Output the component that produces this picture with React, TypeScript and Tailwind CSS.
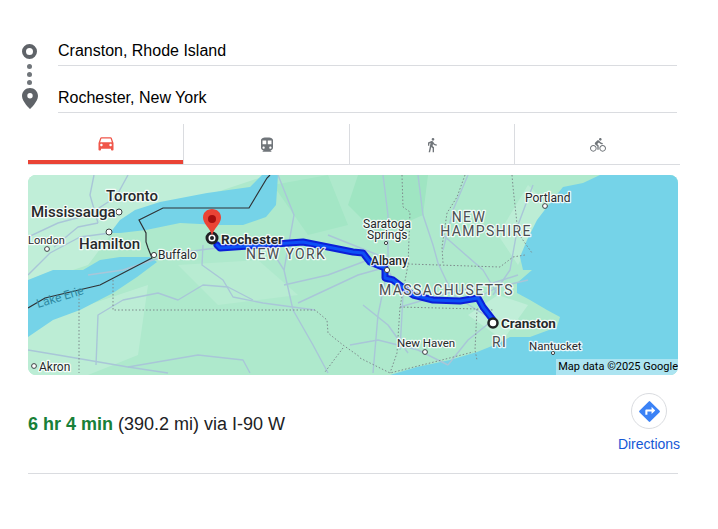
const CAR = "M18.92 6.01C18.72 5.42 18.16 5 17.5 5h-11c-.66 0-1.21.42-1.42 1.01L3 12v8c0 .55.45 1 1 1h1c.55 0 1-.45 1-1v-1h12v1c0 .55.45 1 1 1h1c.55 0 1-.45 1-1v-8l-2.08-5.99zM6.5 16c-.83 0-1.5-.67-1.5-1.5S5.67 13 6.5 13s1.5.67 1.5 1.5S7.33 16 6.5 16zm11 0c-.83 0-1.5-.67-1.5-1.5s.67-1.5 1.5-1.5 1.5.67 1.5 1.5-.67 1.5-1.5 1.5zM5 11l1.5-4.5h11L19 11H5z";
const TRANSIT = "M12 2c-4.42 0-8 .5-8 4v9.5C4 17.43 5.57 19 7.5 19L6 20.5v.5h12v-.5L16.5 19c1.93 0 3.5-1.57 3.5-3.5V6c0-3.5-3.58-4-8-4zM7.5 17c-.83 0-1.5-.67-1.5-1.5S6.67 14 7.5 14s1.5.67 1.5 1.5S8.33 17 7.5 17zm3.5-6H6V6h5v5zm5.5 6c-.83 0-1.5-.67-1.5-1.5s.67-1.5 1.5-1.5 1.5.67 1.5 1.5-.67 1.5-1.5 1.5zm1.5-6h-5V6h5v5z";
const WALK = "M13.5 5.5c1.1 0 2-.9 2-2s-.9-2-2-2-2 .9-2 2 .9 2 2 2zM9.8 8.9L7 23h2.1l1.8-8 2.1 2v6h2v-7.5l-2.1-2 .6-3C14.8 12 16.8 13 19 13v-2c-1.9 0-3.5-1-4.3-2.4l-1-1.6c-.4-.6-1-1-1.7-1-.3 0-.5.1-.8.1L6 8.3V13h2V9.6l1.8-.7";
const BIKE = "M15.5 5.5c1.1 0 2-.9 2-2s-.9-2-2-2-2 .9-2 2 .9 2 2 2zM5 12c-2.8 0-5 2.2-5 5s2.2 5 5 5 5-2.2 5-5-2.2-5-5-5zm0 8.5c-1.9 0-3.5-1.6-3.5-3.5s1.6-3.5 3.5-3.5 3.5 1.6 3.5 3.5-1.6 3.5-3.5 3.5zm5.8-10l2.4-2.4.8.8c1.3 1.3 3 2.1 5.1 2.1V9c-1.5 0-2.7-.6-3.6-1.5l-1.9-1.9c-.5-.4-1-.6-1.6-.6s-1.1.2-1.4.6L7.8 8.4c-.4.4-.6.9-.6 1.4 0 .6.2 1.1.6 1.4L11 14v5h2v-6.2l-2.2-2.3zM19 12c-2.8 0-5 2.2-5 5s2.2 5 5 5 5-2.2 5-5-2.2-5-5-5zm0 8.5c-1.9 0-3.5-1.6-3.5-3.5s1.6-3.5 3.5-3.5 3.5 1.6 3.5 3.5-1.6 3.5-3.5 3.5z";
const DIRECTIONS = "M21.71 11.29l-9-9a.996.996 0 0 0-1.41 0l-9 9a.996.996 0 0 0 0 1.41l9 9c.39.39 1.02.39 1.41 0l9-9a.996.996 0 0 0 0-1.41zM14 14.5V12h-4v3H8v-4c0-.55.45-1 1-1h5V7.5l3.5 3.5-3.5 3.5z";

const tabs = [
  { path: CAR, size: 20, color: "#f0564a", width: "w-[155px]" },
  { path: TRANSIT, size: 18, color: "#70757a", width: "w-[166px]" },
  { path: WALK, size: 16, color: "#70757a", width: "w-[165px]" },
  { path: BIKE, size: 16, color: "#70757a", width: "w-[166px]" },
];

const roads = [
  "0,62 30,48 60,40 88,22 100,0",
  "0,100 22,78 52,62 82,58",
  "26,72 50,52 70,48",
  "70,48 62,20 66,0",
  "125,85 150,78 180,74 192,73",
  "175,70 174,90 195,105 205,122 235,128 287,135",
  "60,100 95,95 125,85",
  "68,190 70,140 95,125 130,118 150,125 175,110 200,112 225,125",
  "0,175 30,180 100,192 140,198",
  "100,192 170,180 215,185 222,198",
  "240,70 256,95 265,135 285,170 300,198",
  "250,0 266,40 256,95",
  "256,110 300,100 340,85 360,92",
  "270,128 330,100 355,93",
  "300,60 330,72 375,90",
  "355,0 360,40 360,92 350,140 345,198",
  "360,95 375,120 372,175",
  "322,170 350,165 390,175 420,190",
  "390,0 395,40 405,70 410,88 425,120 465,145",
  "440,0 425,35 415,75",
  "415,60 455,95 470,120",
  "505,10 490,50 482,95 465,120",
  "465,145 440,165 420,190",
  "372,132 420,118 465,108 490,100",
  "445,125 470,112 500,105",
  "335,130 360,150 380,178",
];

const stateLines = [
  "85,105 85,135 287,135 299,145 300,158 315,170 332,182",
  "51,120 51,198",
  "315,173 297,197",
  "374,0 375,32 382,37 380,90 372,132 369,178 362,198",
  "380,89 472,92 485,82 497,80",
  "437,0 429,22 419,38 414,72 415,88",
  "484,0 485,12 490,58 504,78",
  "372,132 449,134 465,135",
  "449,134 447,175 449,185",
  "332,183 362,198 402,188 445,177",
];

const route = "189,70 192,73 275,67 325,77 335,78 342,87 357,93 357,103 365,105 385,120 405,125 432,126 450,123 455,132 465,145";

type Label = { x: number; y: number; text: string; size: number; weight?: number; spacing?: number; anchor?: "start" | "middle"; fill?: string };

const labels: Label[] = [
  { x: 78, y: 26, text: "Toronto", size: 15, weight: 500 },
  { x: 3, y: 42, text: "Mississauga", size: 15, weight: 500 },
  { x: 51, y: 74, text: "Hamilton", size: 15, weight: 500 },
  { x: 0, y: 69, text: "London", size: 11 },
  { x: 130, y: 84, text: "Buffalo", size: 12 },
  { x: 193, y: 69, text: "Rochester", size: 13.5, weight: 700 },
  { x: 218, y: 84, text: "NEW YORK", size: 14, spacing: 1.4, fill: "#4b4f52" },
  { x: 11, y: 196, text: "Akron", size: 12 },
  { x: 497, y: 27, text: "Portland", size: 12 },
  { x: 335, y: 53, text: "Saratoga", size: 12 },
  { x: 339, y: 64, text: "Springs", size: 12 },
  { x: 343, y: 90, text: "Albany", size: 12, weight: 500 },
  { x: 441, y: 47, text: "NEW", size: 14, spacing: 1.4, fill: "#4b4f52", anchor: "middle" },
  { x: 458, y: 61, text: "HAMPSHIRE", size: 14, spacing: 1.4, fill: "#4b4f52", anchor: "middle" },
  { x: 351, y: 120, text: "MASSACHUSETTS", size: 14, spacing: 1.4, fill: "#4b4f52" },
  { x: 473, y: 153, text: "Cranston", size: 13.5, weight: 700 },
  { x: 464, y: 172, text: "RI", size: 14, spacing: 1.4, fill: "#4b4f52" },
  { x: 501, y: 175, text: "Nantucket", size: 11.5 },
  { x: 369, y: 172, text: "New Haven", size: 11.5 },
];

const towns = [
  [91, 37, 3],
  [79, 38, 2.6],
  [81, 57, 3],
  [19, 74, 2.4],
  [126, 80, 2.6],
  [6, 191, 2.4],
  [517, 31, 2.4],
  [358, 68, 1.6],
  [359, 95, 2.6],
  [397, 177, 2.4],
  [525, 178, 1.6],
];

function Icon({ path, size, color }: { path: string; size: number; color: string }) {
  return (
    <svg width={size} height={size} viewBox="0 0 24 24" fill={color}>
      <path d={path} />
    </svg>
  );
}

function RouteMap() {
  return (
    <svg viewBox="0 0 650 200" width="650" height="200" className="block font-['Roboto',sans-serif]">
      <rect width="650" height="200" fill="#aee9cc" />
      {/* lighter land */}
      <path d="M0 0H240L150 30 90 50 60 90 0 110Z" fill="#c0eeD8" />
      <path d="M0 150 60 130 120 110 110 180 60 200H0Z" fill="#bcedd5" />
      <path d="M150 90 230 85 270 120 190 130Z" fill="#b8ecd2" />
      <path d="M330 0H400L395 40 350 60 320 30Z" fill="#9fe5c2" />
      <path d="M245 10 300 0 320 50 280 60Z" fill="#a3e6c5" />
      <path d="M440 140 470 120 500 130 475 165Z" fill="#c0eed8" />
      <path d="M500 10 520 30 490 90 470 60Z" fill="#bcedd5" />
      {/* water */}
      <path d="M82 58 92 45 107 35 132 27 179 18 222 12 234 0H250L248 30 238 42 215 50 192 50 152 48 118 55 92 58Z" fill="#75d3e8" />
      <path d="M0 105 25 95 55 95 72 85 92 82 122 82 129 87 109 102 85 118 52 135 25 145 0 162Z" fill="#75d3e8" />
      <path d="M650 0H572L555 8 535 12 522 28 509 45 499 65 492 82 495 95 504 95 489 108 489 118 502 125 519 135 532 142 529 152 502 162 482 162 469 169 449 177 422 185 389 192 362 200H650Z" fill="#75d3e8" />
      {/* roads */}
      {roads.map((points) => (
        <polyline key={points} points={points} fill="none" stroke="#a9c6d8" strokeWidth="1.4" strokeLinejoin="round" />
      ))}
      {stateLines.map((points) => (
        <polyline key={points} points={points} fill="none" stroke="#7d8a8c" strokeWidth="1" strokeDasharray="1.5 2" />
      ))}
      <polyline points="0,133 17,123 72,110 124,83 120,73 118,67 118,58 111,45 135,33 221,33 239,3 242,0" fill="none" stroke="#2f3336" strokeWidth="1.2" />
      <text x="10" y="133" transform="rotate(-17 10 133)" fontSize="12" fill="#2f8aa3">Lake Erie</text>
      {/* route */}
      <polyline points={route} fill="none" stroke="#0b1fd8" strokeWidth="7" strokeLinejoin="round" strokeLinecap="round" />
      <polyline points={route} fill="none" stroke="#0d50f5" strokeWidth="3" strokeLinejoin="round" strokeLinecap="round" />
      {towns.map(([x, y, r]) => (
        <circle key={`${x}-${y}`} cx={x} cy={y} r={r} fill="#fff" stroke="#3c4043" strokeWidth="1" />
      ))}
      {labels.map((l) => (
        <text
          key={l.text}
          x={l.x}
          y={l.y}
          fontSize={l.size}
          fontWeight={l.weight ?? 400}
          letterSpacing={l.spacing}
          textAnchor={l.anchor ?? "start"}
          fill={l.fill ?? "#26292b"}
          stroke="#ffffff"
          strokeOpacity="0.85"
          strokeWidth="2.5"
          strokeLinejoin="round"
          className="[paint-order:stroke]"
        >
          {l.text}
        </text>
      ))}
      {/* endpoints */}
      <circle cx="184" cy="63" r="5" fill="#fff" stroke="#202124" strokeWidth="3" />
      <circle cx="184" cy="63" r="2" fill="#202124" />
      <circle cx="465" cy="148" r="4.5" fill="#fff" stroke="#202124" strokeWidth="2.5" />
      <path d="M184 61c-1-5-3-7-6-11-2-3-3-5-3-7.500 0-5 4-8.500 9-8.500s9 3.500 9 8.500c0 2.500-1 4.500-3 7.500-3 4-5 6-6 11z" fill="#ea4335" />
      <circle cx="184" cy="44" r="4" fill="#a50e0e" />
    </svg>
  );
}

export default function App() {
  return (
    <div className="min-h-[529px] bg-white pt-[19px] font-['Liberation_Sans',Arial,sans-serif]">
      <div className="ml-[22px] flex w-[655px]">
        <div className="mr-[21px] flex w-[15px] flex-col items-center pt-[25px]">
          <div className="h-[15px] w-[15px] rounded-full border-[4px] border-[#5f6368]" />
          <div className="mt-[5px] h-[5px] w-[5px] rounded-full bg-[#70757a]" />
          <div className="mt-[3px] h-[5px] w-[5px] rounded-full bg-[#70757a]" />
          <div className="mt-[3px] h-[5px] w-[5px] rounded-full bg-[#70757a]" />
          <svg width="16" height="21" viewBox="0 0 16 21" className="mt-[3px]" fill="#5f6368">
            <path d="M8 0C3.600 0 0 3.500 0 7.900 0 13.500 8 21 8 21s8-7.500 8-13.100C16 3.500 12.400 0 8 0zm0 10.500a2.700 2.700 0 1 1 0-5.400 2.700 2.700 0 0 1 0 5.400z" />
          </svg>
        </div>
        <div className="flex-1 text-base text-black">
          <div className="flex h-[47px] items-end border-b border-[#dadce0] pb-[2px] leading-6">Cranston, Rhode Island</div>
          <div className="flex h-[47px] items-end border-b border-[#dadce0] pb-[2px] leading-6">Rochester, New York</div>
        </div>
      </div>

      <div className="ml-[28px] mt-[11px] flex h-[41px] w-[652px] border-b border-[#dadce0]">
        {tabs.map((tab, i) => (
          <div
            key={tab.path}
            className={`flex items-center justify-center pt-[2px] ${tab.width} ${i === 0 ? "border-b-4 border-[#ea4335]" : "border-l border-[#dadce0]"}`}
          >
            <Icon path={tab.path} size={tab.size} color={tab.color} />
          </div>
        ))}
      </div>

      <div className="relative ml-[28px] mt-[10px] h-[200px] w-[650px] overflow-hidden rounded-lg">
        <RouteMap />
        <div className="absolute bottom-0 right-0 bg-white/40 pl-[2px] font-['Roboto',sans-serif] text-[11px] leading-[16px] text-black">
          Map data ©2025 Google
        </div>
      </div>

      <div className="ml-[28px] mt-[18px] flex w-[652px] justify-between">
        <div className="pt-[19px] text-[18px] leading-6 text-[#202124]">
          <span className="font-bold text-[#188038]">6 hr 4 min</span> (390.2 mi) via I-90 W
        </div>
        <div className="flex w-[62px] flex-col items-center">
          <div className="flex h-[36px] w-[36px] items-center justify-center rounded-full border border-[#dadce0]">
            <Icon path={DIRECTIONS} size={25} color="#3b82f6" />
          </div>
          <div className="mt-[5px] whitespace-nowrap text-sm leading-5 text-[#1558d6]">Directions</div>
        </div>
      </div>

      <div className="ml-[28px] mt-[19px] h-px w-[650px] bg-[#dadce0]" />
    </div>
  );
}
